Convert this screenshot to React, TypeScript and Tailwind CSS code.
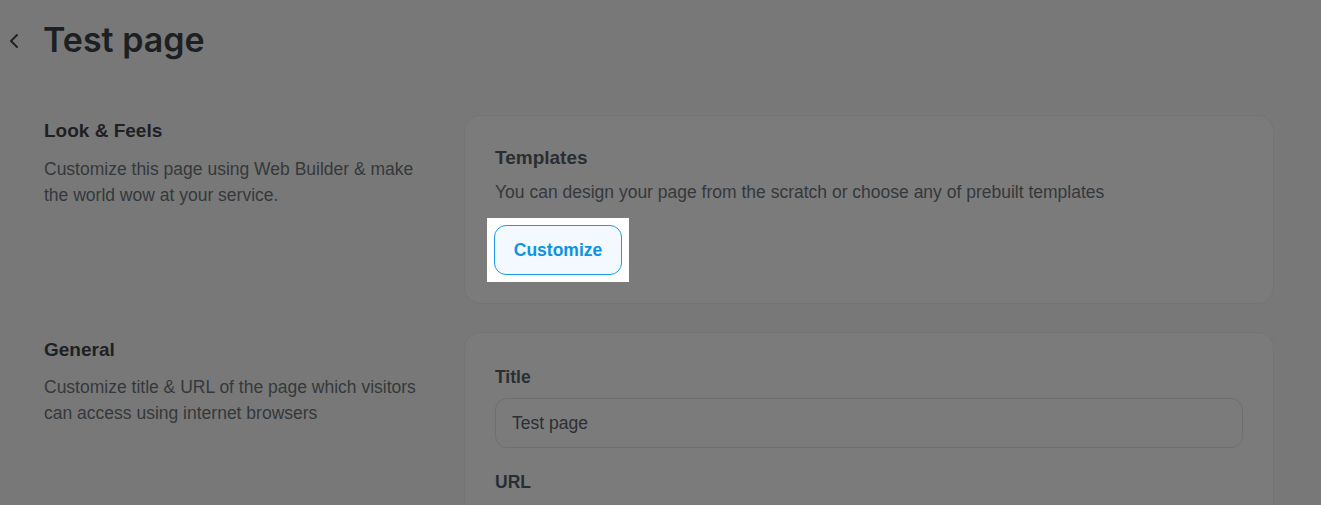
import React from "react";

function Chevron() {
  return (
    <svg width="10" height="16" viewBox="0 0 10 16" fill="none" className="mt-[2px]">
      <polyline points="8,2 2,8 8,14" stroke="#1f2326" strokeWidth="2" strokeLinecap="round" strokeLinejoin="round" />
    </svg>
  );
}

export default function App() {
  return (
    <div className="h-[505px] overflow-hidden bg-[#787878] font-['Liberation_Sans',Arial,sans-serif]">
      <header className="flex items-center pl-[9px] pt-[20px]">
        <Chevron />
        <h1 className="ml-[24px] font-['Inter',sans-serif] text-[34px] font-semibold leading-[40px] text-[#1d2023]">
          Test page
        </h1>
      </header>

      <div className="mt-[55px] grid grid-cols-[420px_810px] gap-y-[28px] pl-[44px]">
        <div className="pt-[2px]">
          <h2 className="text-[19px] font-bold leading-[28px] text-[#1e2124]">Look &amp; Feels</h2>
          <p className="mt-[11px] text-[17.5px] leading-[26px] text-[#35383b]">
            Customize this page using Web Builder &amp; make
            <br />
            the world wow at your service.
          </p>
        </div>
        <section className="rounded-[16px] border border-[#747474] bg-[#7b7b7b] px-[30px] pt-[30px] pb-[21px]">
          <h3 className="text-[19px] font-bold leading-[24px] text-[#2a2e31]">Templates</h3>
          <p className="mt-[10px] text-[17.5px] leading-[24px] text-[#35383b]">
            You can design your page from the scratch or choose any of prebuilt templates
          </p>
          <div className="mt-[14px] ml-[-8px] inline-block bg-white p-[7px]">
            <button
              type="button"
              className="h-[50px] w-[128px] rounded-[12px] border border-[#1a9be8] bg-[#f3f9fe] text-[17.5px] font-bold text-[#0d93e2]"
            >
              Customize
            </button>
          </div>
        </section>

        <div className="pt-[4px]">
          <h2 className="text-[19px] font-bold leading-[28px] text-[#1e2124]">General</h2>
          <p className="mt-[10px] text-[17.5px] leading-[26px] text-[#35383b]">
            Customize title &amp; URL of the page which visitors
            <br />
            can access using internet browsers
          </p>
        </div>
        <section className="rounded-[16px] border border-[#747474] bg-[#7b7b7b] px-[30px] pt-[32px] pb-[30px]">
          <label className="block text-[17.5px] font-bold leading-[24px] text-[#2a2e31]">Title</label>
          <div className="mt-[9px] flex h-[50px] items-center rounded-[12px] border border-[#6f6f6f] px-[16px] text-[17.5px] text-[#2c2f32]">
            Test page
          </div>
          <label className="mt-[22px] block text-[17.5px] font-bold leading-[24px] text-[#2a2e31]">URL</label>
          <div className="mt-[11px] h-[49px] rounded-[12px] border border-[#6f6f6f]" />
        </section>
      </div>
    </div>
  );
}
